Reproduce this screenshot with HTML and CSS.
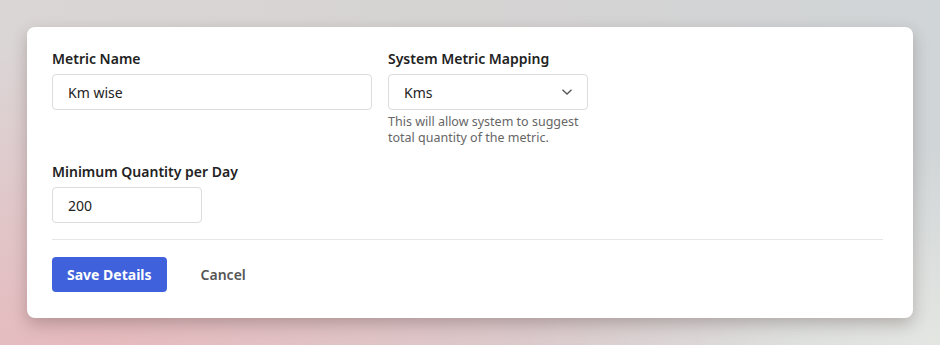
FILE: index.html
```html
<!DOCTYPE html>
<html lang="en">
<head>
    <meta charset="UTF-8">
    <title>Metric Details</title>
    <link rel="stylesheet" href="styles.css">
</head>
<body>

<div class="card">
    <div class="row">
        <div class="field field-wide">
            <label class="label">Metric Name</label>
            <input class="input" type="text" value="Km wise">
        </div>
        <div class="field field-select">
            <label class="label">System Metric Mapping</label>
            <div class="select">
                <span>Kms</span>
                <svg class="chevron" width="12" height="8" viewBox="0 0 12 8">
                    <path d="M1.5 1.8 L6 6 L10.5 1.8" fill="none" stroke="#555" stroke-width="1.3"/>
                </svg>
            </div>
            <p class="help">This will allow system to suggest total quantity of the metric.</p>
        </div>
    </div>

    <div class="field field-small">
        <label class="label">Minimum Quantity per Day</label>
        <input class="input" type="text" value="200">
    </div>

    <div class="divider"></div>

    <div class="actions">
        <button class="btn-primary">Save Details</button>
        <button class="btn-link">Cancel</button>
    </div>
</div>

</body>
</html>
```

FILE: styles.css
```css
html, body {
    height: 100%;
}
body {
    font-family: "Noto Sans", "Open Sans", sans-serif;
    margin: 0;
    padding: 27px;
    box-sizing: border-box;
    background:
        radial-gradient(ellipse 700px 300px at 10% 100%, rgba(230, 184, 188, 0.95), rgba(230, 184, 188, 0) 100%),
        radial-gradient(ellipse 420px 200px at 100% 100%, #e4e6e2, rgba(228, 230, 226, 0) 100%),
        linear-gradient(90deg, #dbd6d6 0%, #d6d3d3 50%, #d0d5d7 100%);
    color: #222;
}
.card {
    background: #fff;
    border-radius: 8px;
    padding: 22px 30px 26px 25px;
    box-shadow: 0 6px 16px rgba(60, 40, 40, 0.28);
}
.row {
    display: flex;
    gap: 16px;
}
.field {
    display: flex;
    flex-direction: column;
}
.field-wide {
    width: 320px;
}
.field-select {
    width: 200px;
}
.field-small {
    width: 150px;
    margin-top: 16px;
}
.label {
    font-size: 14px;
    font-weight: 600;
    line-height: 20px;
    margin-bottom: 5px;
    white-space: nowrap;
}
.input, .select {
    box-sizing: border-box;
    height: 36px;
    border: 1px solid #dcdcdc;
    border-radius: 4px;
    padding: 0 15px;
    font-family: inherit;
    font-size: 14px;
    color: #222;
    background: #fff;
    outline: none;
}
.select {
    display: flex;
    align-items: center;
    justify-content: space-between;
}
.chevron {
    margin-right: -1px;
}
.help {
    margin: 4px 0 0;
    font-size: 12.5px;
    line-height: 16px;
    color: #666;
}
.divider {
    height: 1px;
    background: #e6e6e6;
    margin: 16px 0 17px;
}
.actions {
    display: flex;
    align-items: center;
    gap: 34px;
}
.btn-primary {
    height: 35px;
    padding: 0 15px;
    border: none;
    border-radius: 4px;
    background: #3f62dc;
    color: #fff;
    font-family: inherit;
    font-size: 14px;
    font-weight: 700;
    cursor: pointer;
}
.btn-link {
    border: none;
    background: none;
    padding: 0;
    color: #555;
    font-family: inherit;
    font-size: 14px;
    font-weight: 600;
    cursor: pointer;
}
```
